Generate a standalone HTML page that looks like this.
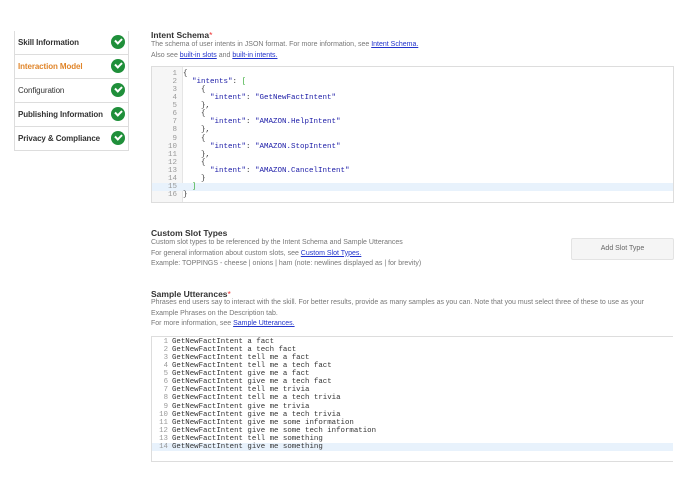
<!DOCTYPE html>
<html><head><style>
body{margin:0;width:695px;height:494px;background:#fff;font-family:"Liberation Sans",sans-serif;position:relative;overflow:hidden;color:#222}
.side{position:absolute;left:14px;top:31px;width:113px;border:1px solid #ddd;border-top:none}
.side div{height:23px;border-bottom:1px solid #ddd;font-size:8px;line-height:23px;padding-left:3px;position:relative;font-weight:bold;color:#333;letter-spacing:-0.1px}
.side div:last-child{border-bottom:none}
.ck{position:absolute;right:3px;top:4px;width:14px;height:14px;border-radius:50%;background:#1f8f3a}
.ck:after{content:"";position:absolute;left:4px;top:3px;width:5px;height:3px;border-left:2px solid #fff;border-bottom:2px solid #fff;transform:rotate(-45deg)}
.t{position:absolute;font-size:8.5px;font-weight:bold;color:#333}
.t b{color:#e33;font-weight:normal}
.d{position:absolute;font-size:7px;color:#777;line-height:10.5px}
.d a{color:#2233cc;text-decoration:underline}
.ed{position:absolute;left:151px;width:521px;border:1px solid #ddd;background:#fff;font-family:"Liberation Mono",monospace;font-size:7.5px;color:#333}
.ed .g{position:absolute;left:0;top:0;bottom:0;width:30px;background:#f6f6f6;border-right:1px solid #e5e5e5}
.ln{position:relative;height:8.07px;line-height:8.07px;white-space:pre}
.ln i{font-style:normal;display:inline-block;width:25px;text-align:right;color:#999;margin-right:6px}
.ed2{font-size:7.4px}
.ed2 .ln i{width:16px;margin-right:4px}
.s{color:#1a1aa6}
.btn{position:absolute;left:571px;top:238px;width:101px;height:20px;border:1px solid #e3e3e3;background:#f5f5f5;font-size:7px;color:#666;text-align:center;line-height:20px;border-radius:2px}
</style></head><body>
<div class="side">
<div>Skill Information<span class="ck"></span></div>
<div style="color:#e0852a">Interaction Model<span class="ck"></span></div>
<div style="font-weight:normal">Configuration<span class="ck"></span></div>
<div>Publishing Information<span class="ck"></span></div>
<div>Privacy &amp; Compliance<span class="ck"></span></div>
</div>
<div class="t" style="left:151px;top:30px">Intent Schema<b>*</b></div>
<div class="d" style="left:151px;top:40px">The schema of user intents in JSON format. For more information, see <a>Intent Schema.</a><br>Also see <a>built-in slots</a> and <a>built-in intents.</a></div>
<div class="ed" style="top:66px;height:135px"><div class="g"></div><div style="padding-top:3px">
<div class="ln"><i>1</i>{</div>
<div class="ln"><i>2</i>  <span class="s">"intents"</span>: <span style="color:#3a3">[</span></div>
<div class="ln"><i>3</i>    {</div>
<div class="ln"><i>4</i>      <span class="s">"intent"</span>: <span class="s">"GetNewFactIntent"</span></div>
<div class="ln"><i>5</i>    },</div>
<div class="ln"><i>6</i>    {</div>
<div class="ln"><i>7</i>      <span class="s">"intent"</span>: <span class="s">"AMAZON.HelpIntent"</span></div>
<div class="ln"><i>8</i>    },</div>
<div class="ln"><i>9</i>    {</div>
<div class="ln"><i>10</i>      <span class="s">"intent"</span>: <span class="s">"AMAZON.StopIntent"</span></div>
<div class="ln"><i>11</i>    },</div>
<div class="ln"><i>12</i>    {</div>
<div class="ln"><i>13</i>      <span class="s">"intent"</span>: <span class="s">"AMAZON.CancelIntent"</span></div>
<div class="ln"><i>14</i>    }</div>
<div class="ln" style="background:#e8f2fc"><i>15</i>  <span style="color:#3a3">]</span></div>
<div class="ln"><i>16</i>}</div>
</div></div>
<div class="t" style="left:151px;top:228px">Custom Slot Types</div>
<div class="d" style="left:151px;top:238px">Custom slot types to be referenced by the Intent Schema and Sample Utterances<br>For general information about custom slots, see <a>Custom Slot Types.</a><br>Example: TOPPINGS - cheese | onions | ham (note: newlines displayed as | for brevity)</div>
<div class="btn">Add Slot Type</div>
<div class="t" style="left:151px;top:289px">Sample Utterances<b>*</b></div>
<div class="d" style="left:151px;top:298px">Phrases end users say to interact with the skill. For better results, provide as many samples as you can. Note that you must select three of these to use as your<br>Example Phrases on the Description tab.<br>For more information, see <a>Sample Utterances.</a></div>
<div class="ed ed2" style="top:336px;height:124px;border-right:none"><div style="padding-top:1px">
<div class="ln"><i>1</i>GetNewFactIntent a fact</div>
<div class="ln"><i>2</i>GetNewFactIntent a tech fact</div>
<div class="ln"><i>3</i>GetNewFactIntent tell me a fact</div>
<div class="ln"><i>4</i>GetNewFactIntent tell me a tech fact</div>
<div class="ln"><i>5</i>GetNewFactIntent give me a fact</div>
<div class="ln"><i>6</i>GetNewFactIntent give me a tech fact</div>
<div class="ln"><i>7</i>GetNewFactIntent tell me trivia</div>
<div class="ln"><i>8</i>GetNewFactIntent tell me a tech trivia</div>
<div class="ln"><i>9</i>GetNewFactIntent give me trivia</div>
<div class="ln"><i>10</i>GetNewFactIntent give me a tech trivia</div>
<div class="ln"><i>11</i>GetNewFactIntent give me some information</div>
<div class="ln"><i>12</i>GetNewFactIntent give me some tech information</div>
<div class="ln"><i>13</i>GetNewFactIntent tell me something</div>
<div class="ln" style="background:#e8f2fc"><i>14</i>GetNewFactIntent give me something</div>
</div></div>
</body></html>
